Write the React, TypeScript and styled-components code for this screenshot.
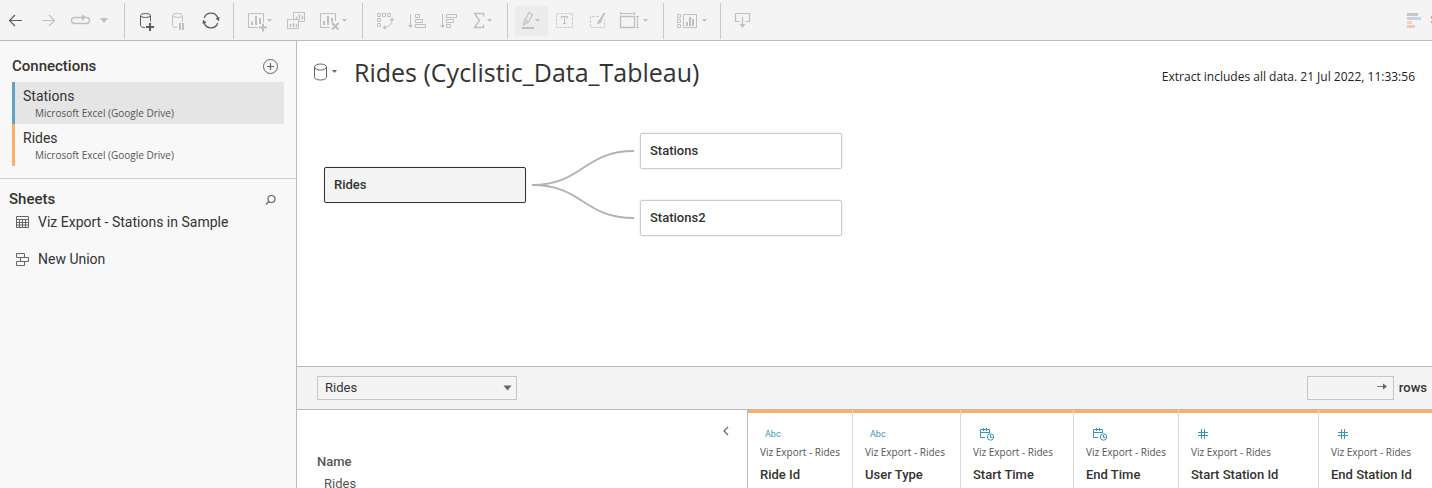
import React from "react";
import styled, { createGlobalStyle } from "styled-components";

const GlobalStyle = createGlobalStyle`
  *, *::before, *::after { box-sizing: border-box; }
  body {
    margin: 0;
    color: #333;
    font-family: Roboto, "Liberation Sans", sans-serif;
    font-size: 13px;
    line-height: 16px;
    overflow: hidden;
  }
  button, input, select { font: inherit; color: inherit; }
  h1, h2, p, ul { margin: 0; padding: 0; }
  ul { list-style: none; }
`;

const altFont = `"Open Sans", "Liberation Sans", sans-serif`;

const App = styled.div`
  height: 100vh;
  display: flex;
  flex-direction: column;
  background: #fff;
`;

/* ---------- toolbar ---------- */

const Toolbar = styled.header`
  flex: none;
  display: flex;
  align-items: center;
  height: 41px;
  background: #f4f4f4;
  border-bottom: 1px solid #bbb;
  overflow: hidden;
`;

const ToolGroup = styled.div<{ $lead?: number; $trail?: number; $last?: boolean }>`
  flex: none;
  display: flex;
  align-items: center;
  height: 36px;
  margin-top: 2px;
  padding-left: ${(p) => p.$lead ?? 0}px;
  padding-right: ${(p) => p.$trail ?? 0}px;
  border-right: ${(p) => (p.$last ? "0" : "1px solid #c9c9c9")};
`;

const ToolButton = styled.button<{ $width?: number; $on?: boolean; $strong?: boolean }>`
  width: ${(p) => p.$width ?? 33}px;
  height: 30px;
  padding: 0;
  border: 0;
  background: ${(p) => (p.$on ? "#ececec" : "transparent")};
  color: ${(p) => (p.$strong ? "#5c5c5c" : "#c0c0c0")};

  svg { display: block; }
`;

const ShowMe = styled.button`
  flex: none;
  display: flex;
  align-items: center;
  gap: 8px;
  width: 25px;
  margin-left: auto;
  padding: 0;
  border: 0;
  background: transparent;
  color: #a8a8a8;
  white-space: nowrap;

  svg { flex: none; }
`;

type IconProps = { w?: number; children: React.ReactNode };

const Glyph = ({ w = 33, children }: IconProps) => (
  <svg width={w} height={30} viewBox={`0 0 ${w} 30`} fill="none" stroke="currentColor" aria-hidden="true">
    {children}
  </svg>
);

const Caret = ({ x }: { x: number }) => (
  <path d={`M${x} 13h5l-2.5 3z`} fill="currentColor" stroke="none" />
);

const Tool = ({
  label, w, strong, on, children,
}: { label: string; w?: number; strong?: boolean; on?: boolean; children: React.ReactNode }) => (
  <ToolButton type="button" aria-label={label} $width={w} $strong={strong} $on={on}>
    <Glyph w={w}>{children}</Glyph>
  </ToolButton>
);

const MainToolbar = () => (
  <Toolbar>
    <ToolGroup $trail={9}>
      <Tool label="Back" strong>
        <path d="M22 14.5H9.5M15 9l-5.5 5.5L15 20" strokeWidth="1.2" />
      </Tool>
      <Tool label="Forward">
        <path d="M9 14.5h12.5M16 9l5.5 5.5L16 20" strokeWidth="1.2" />
      </Tool>
      <Tool label="Replay">
        <path d="M16 11.5H8.5a3 3 0 0 0 0 6h12a3 3 0 0 0 0-6h-1" strokeWidth="1.3" />
        <path d="M16 8l4 3.5-4 3.5z" fill="currentColor" stroke="none" />
      </Tool>
      <Tool label="Replay options" w={16}>
        <path d="M1 12h8l-4 5z" fill="currentColor" stroke="none" />
      </Tool>
    </ToolGroup>
    <ToolGroup $lead={5} $trail={4}>
      <Tool label="New data source" strong>
        <ellipse cx="15.5" cy="9.5" rx="5" ry="2" />
        <path d="M10.5 9.5v10c0 1 1.5 2 4.5 2M20.5 9.5v6" />
        <path d="M20 17v8M16 21h8" strokeWidth="2" />
      </Tool>
      <Tool label="Pause updates">
        <ellipse cx="14.5" cy="9.5" rx="5" ry="2" />
        <path d="M9.5 9.5v10c0 1 1.5 2 4.5 2M19.5 9.5v6" />
        <path d="M17 17v7M20 17v7" strokeWidth="2" />
      </Tool>
      <Tool label="Refresh" strong>
        <path d="M8.2 12A7.2 7.2 0 0 1 21.8 12M21.8 17A7.2 7.2 0 0 1 8.2 17" strokeWidth="1.3" />
        <path d="M19.5 12.5l4-1.5-.5 4.2zM10.5 16.5l-4 1.5.5-4.2z" fill="currentColor" stroke="none" />
      </Tool>
    </ToolGroup>
    <ToolGroup $lead={6} $trail={9}>
      <Tool label="New worksheet" w={40}>
        <path d="M18 21.5H8.5v-14h15V16" />
        <path d="M12 15.5V19M16 10v9M20 12v6" strokeWidth="2" />
        <path d="M23 17.5v8M19 21.5h8" strokeWidth="2" />
        <Caret x={27} />
      </Tool>
      <Tool label="Duplicate sheet">
        <path d="M13.5 14.5v-8h11v9h-6M12.5 13.5h-5v9h11v-9h-5" />
        <path d="M16.5 10.5v3M19.5 8.5v5M22.5 9.5v4M10.5 18v3M13.5 17v4M16.5 18v3" strokeWidth="1.5" />
      </Tool>
      <Tool label="Clear sheet" w={40}>
        <path d="M17 21.5H7.5v-14h15V15" />
        <path d="M11 15v4M15 10v9M19 12v4" strokeWidth="2" />
        <path d="M19 17l6.5 6.5M25.5 17L19 23.5" strokeWidth="2" />
        <Caret x={29} />
      </Tool>
    </ToolGroup>
    <ToolGroup $lead={4} $trail={1}>
      <Tool label="Swap rows and columns">
        <path d="M10.5 7.5h3v3h-3zM15.5 7.5h3v3h-3zM20.5 7.5h3v3h-3zM10.5 12.5h3v3h-3zM10.5 17.5h3v3h-3z" />
        <path d="M25 14c0 4-3 7-7.5 7.5" />
        <path d="M22.5 14.5l2.5-3 2.5 3zM18.5 19l-3 2.5 3 2.5z" fill="currentColor" stroke="none" />
      </Tool>
      <Tool label="Sort ascending">
        <path d="M10.5 8v13M15.5 8.5h4v3h-4zM15.5 13.5h7v3h-7zM15.5 18.5h10v3h-10z" />
        <path d="M8 19h5l-2.5 3z" fill="currentColor" stroke="none" />
      </Tool>
      <Tool label="Sort descending">
        <path d="M9.5 8v13M13.5 8.5h10v3h-10zM13.5 13.5h7v3h-7zM13.5 18.5h4v3h-4z" />
        <path d="M7 19h5l-2.5 3z" fill="currentColor" stroke="none" />
      </Tool>
      <Tool label="Totals" w={40}>
        <path d="M17.5 10.5v-3H8.5l5 7-5 7h9v-3" strokeWidth="1.4" />
        <Caret x={21} />
      </Tool>
    </ToolGroup>
    <ToolGroup $lead={7} $trail={9}>
      <Tool label="Highlight" on>
        <path d="M10 14l4-7.5 3.5 2-4 7.5zM10 14l-1.5 5 5-3" strokeWidth="1.2" />
        <path d="M7 22h12" strokeWidth="2" />
        <Caret x={20} />
      </Tool>
      <Tool label="Show mark labels">
        <rect x="8.5" y="7.5" width="16" height="14" strokeDasharray="3 1" strokeOpacity=".75" />
        <path d="M13.5 12.5v-2h6v2M16.5 10.5v7M15 17.5h3" strokeWidth="1.2" />
      </Tool>
      <Tool label="Format">
        <path d="M18 10.5H9.5v11h14v-8" strokeDasharray="3 1" strokeOpacity=".75" />
        <path d="M23.5 7l-4 7" strokeWidth="2" />
        <path d="M19 13l2 1.5c-.5 2.5-2.5 3.5-5.5 3.5 1.5-1.5 1.5-4 3.5-5z" fill="currentColor" stroke="none" />
      </Tool>
      <Tool label="Fit" w={40}>
        <path d="M6.5 10.5h14v11h-14z" strokeWidth="1.3" />
        <path d="M6.5 6v3M20.5 6v3M6.5 7.5h14M22 10.5h3M22 21.5h3M23.5 10.5v11" />
        <Caret x={29} />
      </Tool>
    </ToolGroup>
    <ToolGroup $lead={8} $trail={8}>
      <Tool label="Show or hide cards" w={40}>
        <path d="M5.5 8.5h3v3h-3zM5.5 13.5h3v3h-3zM5.5 18.5h3v3h-3zM11.5 8.5h13v13h-13z" />
        <path d="M15 16v4M18 11v9M21 13v7" strokeWidth="2" />
        <Caret x={30} />
      </Tool>
    </ToolGroup>
    <ToolGroup $lead={5} $last>
      <Tool label="Presentation mode">
        <path d="M13.5 15.5h-4v-8h14v8h-4M16.5 11v9" strokeWidth="1.2" />
        <path d="M13.5 18h6l-3 4z" fill="currentColor" stroke="none" />
      </Tool>
    </ToolGroup>
    <ShowMe type="button">
      <svg width="15" height="15" viewBox="0 0 15 15" aria-hidden="true">
        <path d="M0 0h11v3H0z" fill="#c9c3cf" />
        <path d="M0 4h14v3H0z" fill="#c6d3e6" />
        <path d="M0 8h5v3H0z" fill="#f7d3bd" />
        <path d="M0 12h8v3H0z" fill="#f5c3c8" />
      </svg>
      Show Me
    </ShowMe>
  </Toolbar>
);

/* ---------- sidebar ---------- */

const Workspace = styled.div`
  flex: 1;
  min-height: 0;
  display: grid;
  grid-template-columns: 297px minmax(0, 1fr);
`;

const Sidebar = styled.aside`
  background: #f8f8f8;
  border-right: 1px solid #bbb;
`;

const Section = styled.section<{ $ruled?: boolean }>`
  padding: ${(p) => (p.$ruled ? "14px 12px 12px" : "9px 13px 0 9px")};
  border-bottom: ${(p) => (p.$ruled ? "1px solid #d0d0d0" : "0")};
`;

const SectionHead = styled.div<{ $gap: number }>`
  display: flex;
  align-items: center;
  justify-content: space-between;
  height: 22px;
  margin-bottom: ${(p) => p.$gap}px;
  padding-right: 5px;
`;

const SectionTitle = styled.h2`
  font-size: 15px;
  font-weight: 500;
  line-height: 20px;
`;

const IconButton = styled.button`
  display: grid;
  place-items: center;
  padding: 0;
  border: 0;
  background: transparent;
  color: #666;
`;

const Connection = styled.li<{ $color: string; $selected?: boolean }>`
  height: 42px;
  padding: 6px 8px;
  border-left: 3px solid ${(p) => p.$color};
  background: ${(p) => (p.$selected ? "#e5e5e5" : "transparent")};
`;

const ConnectionName = styled.p`
  font-size: 14px;
  line-height: 17px;
`;

const ConnectionType = styled.p`
  padding-left: 12px;
  color: #555;
  font-family: ${altFont};
  font-size: 10px;
  line-height: 16px;
`;

const SheetList = styled.ul`
  display: grid;
  gap: 17px;
`;

const Sheet = styled.li`
  display: flex;
  align-items: center;
  gap: 9px;
  padding-left: 7px;
  font-size: 14px;
  line-height: 20px;

  svg { color: #666; }
`;

const SidePanel = () => (
  <Sidebar>
    <Section $ruled>
      <SectionHead $gap={5}>
        <SectionTitle>Connections</SectionTitle>
        <IconButton type="button" aria-label="Add connection">
          <svg width="17" height="17" viewBox="0 0 17 17" fill="none" stroke="currentColor">
            <circle cx="8.5" cy="8.5" r="7" />
            <path d="M8.5 5v7M5 8.5h7" strokeWidth="1.2" />
          </svg>
        </IconButton>
      </SectionHead>
      <ul>
        <Connection $color="#5fa3c7" $selected>
          <ConnectionName>Stations</ConnectionName>
          <ConnectionType>Microsoft Excel (Google Drive)</ConnectionType>
        </Connection>
        <Connection $color="#fbb068">
          <ConnectionName>Rides</ConnectionName>
          <ConnectionType>Microsoft Excel (Google Drive)</ConnectionType>
        </Connection>
      </ul>
    </Section>
    <Section>
      <SectionHead $gap={2}>
        <SectionTitle>Sheets</SectionTitle>
        <IconButton type="button" aria-label="Search sheets">
          <svg width="15" height="13" viewBox="0 0 15 13" fill="none" stroke="currentColor" strokeWidth="1.2">
            <circle cx="8.5" cy="6" r="3.5" />
            <path d="M6 8.5L3 11.5" />
          </svg>
        </IconButton>
      </SectionHead>
      <SheetList>
        <Sheet>
          <svg width="13" height="12" viewBox="0 0 13 12" fill="none" stroke="currentColor">
            <path d="M.5.5h12v11H.5zM.5 3.5h12M.5 6.5h12M.5 9h12M3.5 3v8.5M6.5 3v8.5M9.5 3v8.5" />
          </svg>
          Viz Export - Stations in Sample
        </Sheet>
        <Sheet>
          <svg width="13" height="13" viewBox="0 0 13 13" fill="none" stroke="currentColor">
            <path d="M.5.5h8v4h-8zM4.5 4.5h8v4h-8zM.5 8.5h8v4h-8z" />
          </svg>
          New Union
        </Sheet>
      </SheetList>
    </Section>
  </Sidebar>
);

/* ---------- data source canvas ---------- */

const Main = styled.main`
  display: flex;
  flex-direction: column;
  min-width: 0;
  min-height: 0;
`;

const SourceHeader = styled.div`
  flex: none;
  display: flex;
  align-items: center;
  gap: 16px;
  height: 64px;
  padding: 0 17px 2px 16px;
`;

const SourceTitle = styled.h1`
  flex: 1;
  font-family: ${altFont};
  font-size: 25px;
  font-weight: 400;
  line-height: 32px;
`;

const ExtractNote = styled.p`
  padding-top: 10px;
  color: #222;
  font-family: ${altFont};
  font-size: 12px;
`;

const Canvas = styled.div`
  position: relative;
  flex: 1;
  min-height: 0;
  overflow: hidden;
`;

const Links = styled.svg`
  position: absolute;
  left: 235px;
  top: 44px;
`;

const Node = styled.button<{ $x: number; $y: number; $root?: boolean }>`
  position: absolute;
  left: ${(p) => p.$x}px;
  top: ${(p) => p.$y}px;
  width: 202px;
  height: 36px;
  padding: 0 9px;
  border: 1px solid ${(p) => (p.$root ? "#333" : "#ccc")};
  border-radius: 2px;
  background: ${(p) => (p.$root ? "#f4f4f4" : "#fff")};
  box-shadow: 0 0 2px rgba(0, 0, 0, 0.15);
  font-weight: 500;
  text-align: left;
`;

/* ---------- data grid ---------- */

const GridBar = styled.div`
  flex: none;
  display: flex;
  align-items: center;
  justify-content: space-between;
  height: 44px;
  padding: 0 5px 1px 20px;
  background: #f4f4f4;
  border-top: 1px solid #bbb;
  border-bottom: 1px solid #bbb;
`;

const SelectBox = styled.div`
  display: grid;
  align-items: center;

  > * { grid-area: 1 / 1; }
  svg { justify-self: end; margin-right: 5px; pointer-events: none; }
`;

const TableSelect = styled.select`
  appearance: none;
  width: 200px;
  height: 24px;
  padding: 0 7px;
  border: 1px solid #c6c6c6;
  border-radius: 0;
  background: #f4f4f4;
`;

const Rows = styled.label`
  display: flex;
  align-items: center;
  gap: 5px;
  font-weight: 500;
`;

const RowsBox = styled.span`
  display: flex;
  align-items: center;
  width: 87px;
  height: 24px;
  padding: 0 6px 2px 0;
  border: 1px solid #c6c6c6;
`;

const RowsInput = styled.input`
  flex: 1;
  min-width: 0;
  padding: 0 6px;
  border: 0;
  background: transparent;
`;

const GridBody = styled.div`
  flex: none;
  display: grid;
  grid-template-columns: 451px minmax(0, 1fr);
  height: 78px;
  overflow: hidden;
`;

const Details = styled.section`
  display: flex;
  flex-direction: column;
  padding: 14px 16px 0 20px;
  border-right: 1px solid #bbb;
  color: #555;
`;

const Collapse = styled(IconButton)`
  align-self: flex-end;
  margin-bottom: 16px;
`;

const DetailsTitle = styled.h2`
  font-size: 13px;
  font-weight: 500;
  line-height: 16px;
`;

const DetailsValue = styled.p`
  padding: 6px 7px 0;
`;

const FieldTable = styled.table`
  width: 100%;
  table-layout: fixed;
  border-collapse: separate;
  border-spacing: 0;
`;

const Field = styled.th<{ $width?: number }>`
  width: ${(p) => (p.$width ? `${p.$width}px` : "auto")};
  height: 78px;
  padding: 0;
  border-right: 1px solid #d9d9d9;
  font-weight: 400;
  text-align: left;
  vertical-align: top;
  white-space: nowrap;

  &:last-child { border-right: 0; }
`;

const FieldHead = styled.div`
  display: flex;
  flex-direction: column;
  padding: 13px 0 0 12px;
  border-top: 3px solid #fbb068;
`;

const FieldType = styled.span`
  display: flex;
  align-items: center;
  height: 16px;
  padding-left: 5px;
  color: #3f93b5;
  font-size: 9px;
`;

const FieldSource = styled.span`
  padding-top: 2px;
  color: #555;
  font-family: ${altFont};
  font-size: 10px;
  line-height: 16px;
`;

const FieldName = styled.span`
  padding-top: 7px;
  font-weight: 500;
  line-height: 16px;
`;

type Kind = "text" | "datetime" | "number";

const FieldIcon = ({ kind }: { kind: Kind }) => {
  if (kind === "text") return <>Abc</>;
  if (kind === "number")
    return (
      <svg width="13" height="12" viewBox="0 0 13 12" fill="none" stroke="currentColor" role="img" aria-label="Number">
        <path d="M5.5 1v10M8.5 1v10M2 4.5h10M2 7.5h10" />
      </svg>
    );
  return (
    <svg width="16" height="14" viewBox="0 0 16 14" fill="none" stroke="currentColor" role="img" aria-label="Date and time">
      <path d="M7 10.5H2.500v-8h9V6M2.500 5.500h9M5.500 1v3M8.500 1v3" />
      <circle cx="12.5" cy="10" r="3.2" />
      <path d="M12.5 8v2.500h2" />
    </svg>
  );
};

const fields: { name: string; kind: Kind; width?: number }[] = [
  { name: "Ride Id", kind: "text", width: 105 },
  { name: "User Type", kind: "text", width: 108 },
  { name: "Start Time", kind: "datetime", width: 113 },
  { name: "End Time", kind: "datetime", width: 105 },
  { name: "Start Station Id", kind: "number", width: 140 },
  { name: "End Station Id", kind: "number" },
];

export default function DataSourcePage() {
  return (
    <App>
      <GlobalStyle />
      <MainToolbar />
      <Workspace>
        <SidePanel />
        <Main>
          <SourceHeader>
            <IconButton type="button" aria-label="Data source options">
              <svg width="25" height="20" viewBox="0 0 25 20" fill="none" stroke="currentColor">
                <ellipse cx="7.5" cy="5" rx="6" ry="3" />
                <path d="M1.5 5v10c0 1.5 2 3 6 3s6-1.5 6-3V5" />
                <path d="M19 8h5l-2.5 3z" fill="currentColor" stroke="none" />
              </svg>
            </IconButton>
            <SourceTitle>Rides (Cyclistic_Data_Tableau)</SourceTitle>
            <ExtractNote>Extract includes all data. 21 Jul 2022, 11:33:56</ExtractNote>
          </SourceHeader>
          <Canvas>
            <Links width="102" height="72" viewBox="0 0 102 72" fill="none" stroke="#b3b3b3" strokeWidth="2">
              <path d="M0 36C51 36 51 2 102 2M0 36C51 36 51 69 102 69" />
            </Links>
            <Node type="button" $x={27} $y={62} $root>Rides</Node>
            <Node type="button" $x={343} $y={28}>Stations</Node>
            <Node type="button" $x={343} $y={95}>Stations2</Node>
          </Canvas>
          <GridBar>
            <SelectBox>
              <TableSelect aria-label="Table" defaultValue="Rides">
                <option>Rides</option>
                <option>Stations</option>
                <option>Stations2</option>
              </TableSelect>
              <svg width="9" height="6" viewBox="0 0 9 6" aria-hidden="true">
                <path d="M.5.5h8l-4 5z" fill="#666" />
              </svg>
            </SelectBox>
            <Rows>
              <RowsBox>
                <RowsInput type="text" />
                <svg width="10" height="7" viewBox="0 0 10 7" aria-hidden="true">
                  <path d="M0 3.5h7" stroke="#777" />
                  <path d="M6 .5l4 3-4 3z" fill="#666" />
                </svg>
              </RowsBox>
              rows
            </Rows>
          </GridBar>
          <GridBody>
            <Details>
              <Collapse type="button" aria-label="Collapse details">
                <svg width="10" height="14" viewBox="0 0 10 14" fill="none" stroke="currentColor" strokeWidth="1.2">
                  <path d="M7 3L3 7l4 4" />
                </svg>
              </Collapse>
              <DetailsTitle>Name</DetailsTitle>
              <DetailsValue>Rides</DetailsValue>
            </Details>
            <FieldTable>
              <thead>
                <tr>
                  {fields.map((f) => (
                    <Field key={f.name} scope="col" $width={f.width}>
                      <FieldHead>
                        <FieldType><FieldIcon kind={f.kind} /></FieldType>
                        <FieldSource>Viz Export - Rides</FieldSource>
                        <FieldName>{f.name}</FieldName>
                      </FieldHead>
                    </Field>
                  ))}
                </tr>
              </thead>
            </FieldTable>
          </GridBody>
        </Main>
      </Workspace>
    </App>
  );
}
